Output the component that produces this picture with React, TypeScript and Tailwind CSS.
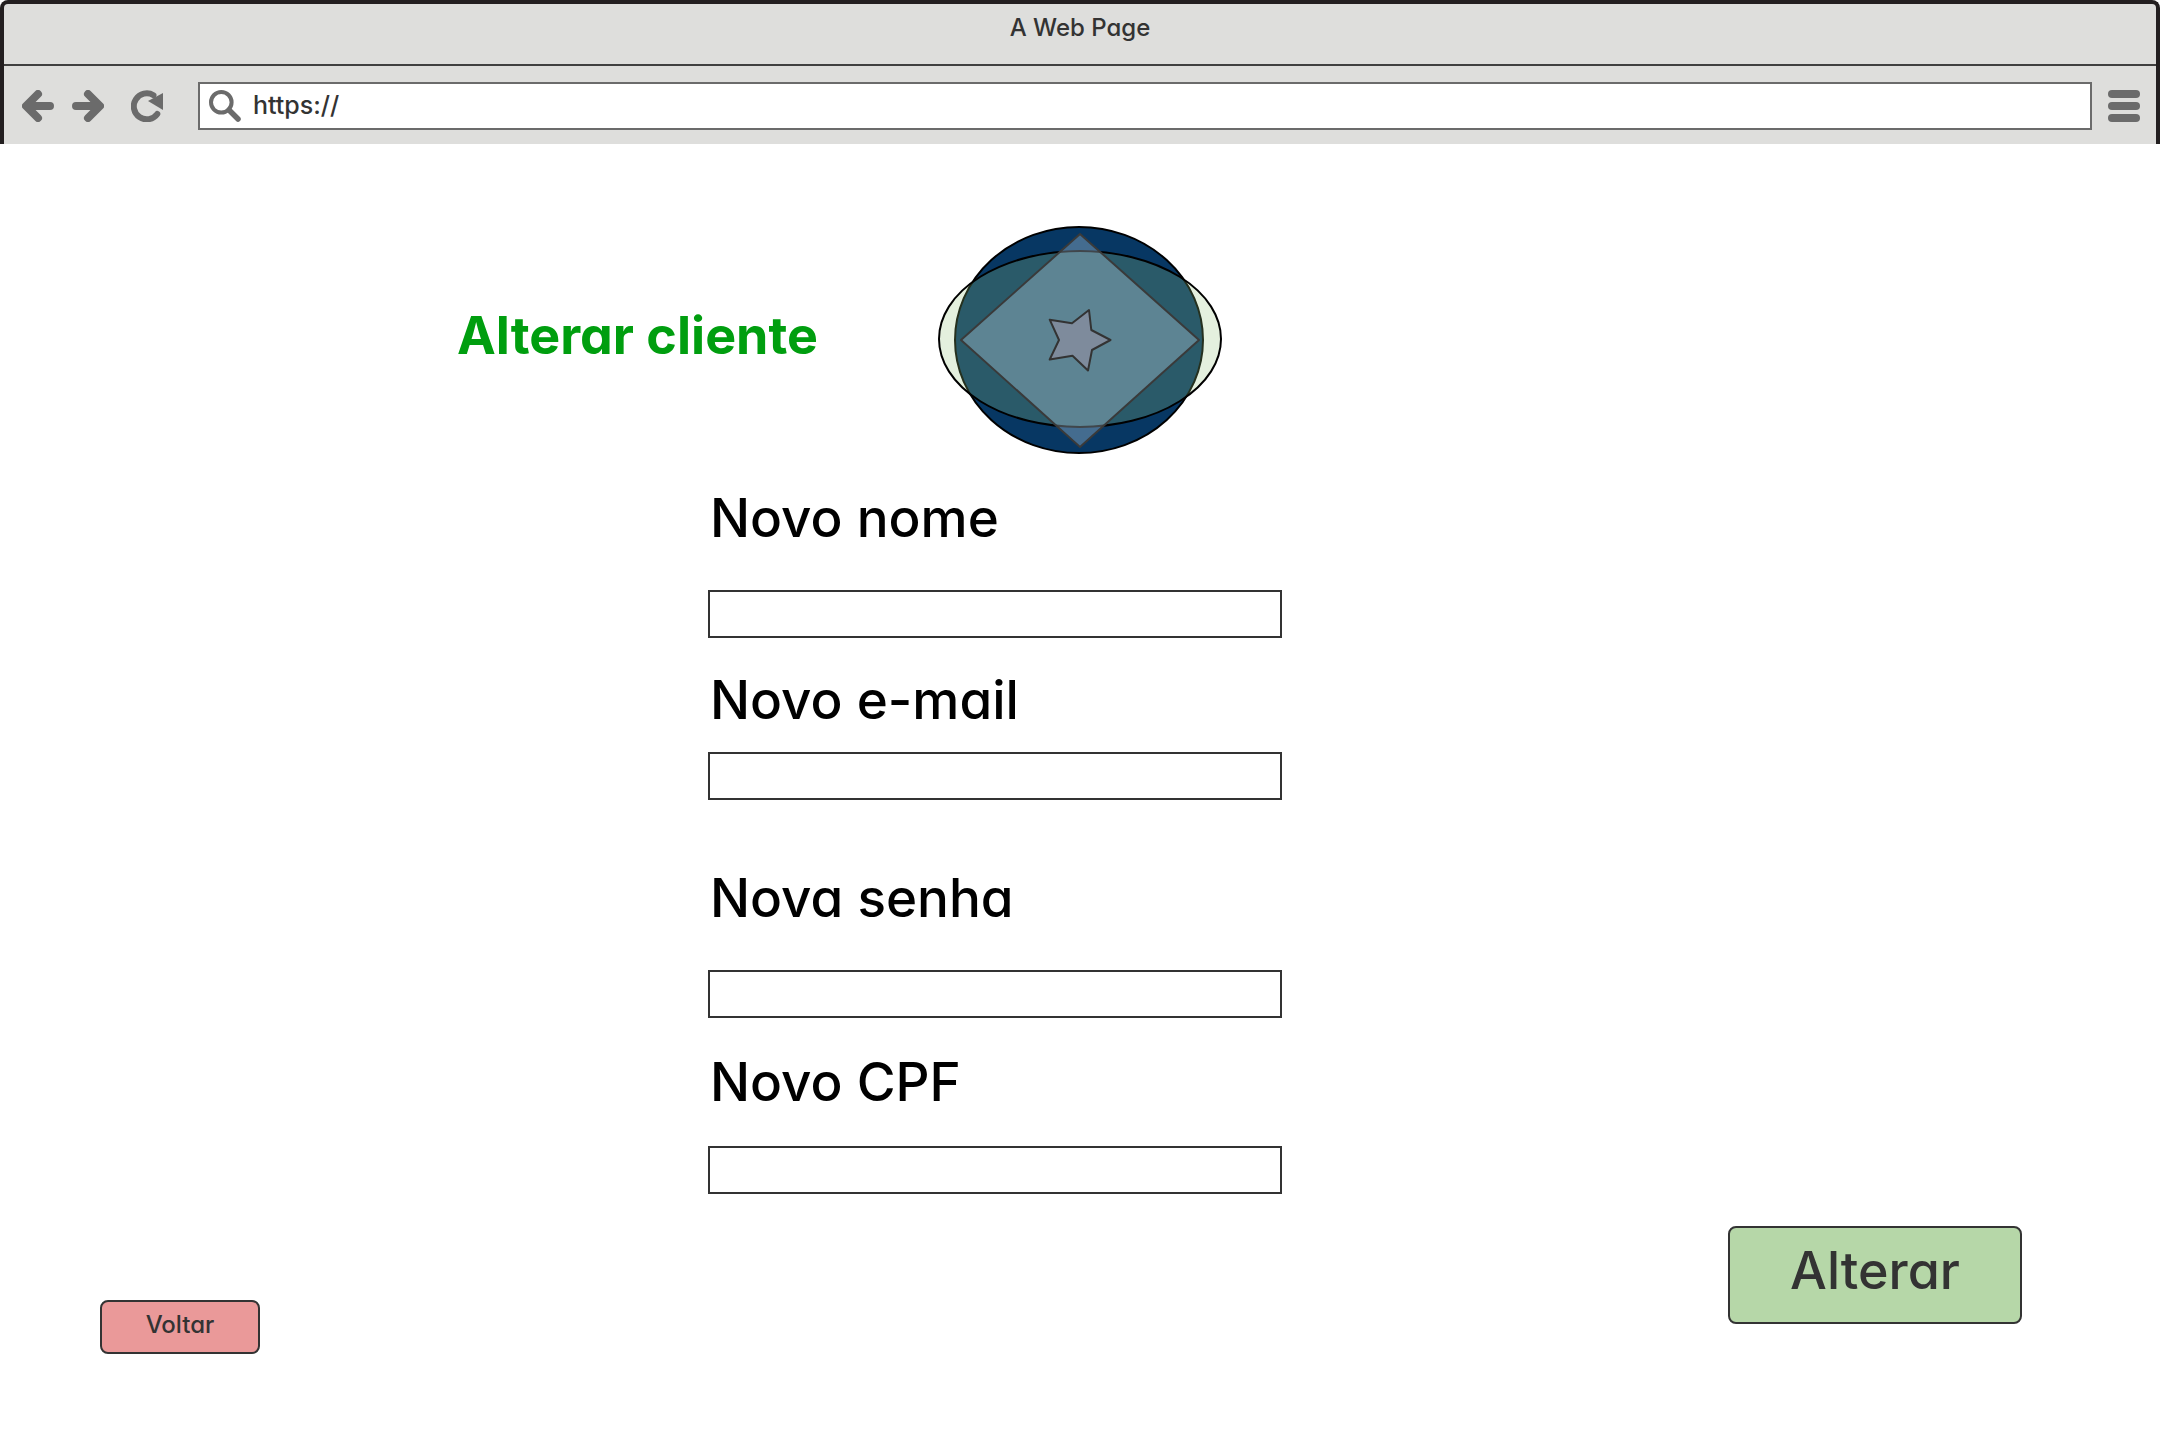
import React from "react";

type Field = { id: string; label: string; type: string; labelGap: string; above: string };

const fields: Field[] = [
  { id: "nome", label: "Novo nome", type: "text", above: "mt-8", labelGap: "gap-10" },
  { id: "email", label: "Novo e-mail", type: "email", above: "mt-[30px]", labelGap: "gap-5" },
  { id: "senha", label: "Nova senha", type: "password", above: "mt-[66px]", labelGap: "gap-10" },
  { id: "cpf", label: "Novo CPF", type: "text", above: "mt-8", labelGap: "gap-8" },
];

function BackIcon() {
  return (
    <svg viewBox="0 0 32 32" className="size-8" fill="none" stroke="#6b6b6b" strokeWidth="8" strokeLinecap="round" strokeLinejoin="round" aria-hidden="true">
      <path d="M16 4L4 16L16 28M5 16H28" />
    </svg>
  );
}

function ForwardIcon() {
  return (
    <svg viewBox="0 0 32 32" className="size-8" fill="none" stroke="#6b6b6b" strokeWidth="8" strokeLinecap="round" strokeLinejoin="round" aria-hidden="true">
      <path d="M16 4L28 16L16 28M27 16H4" />
    </svg>
  );
}

function ReloadIcon() {
  return (
    <svg viewBox="0 0 32 32" className="size-8" aria-hidden="true">
      <path d="M22.5 5.2A13 13 0 1 0 26.3 24" fill="none" stroke="#6b6b6b" strokeWidth="6" strokeLinecap="round" />
      <path d="M32 3V20L17 11Z" fill="#6b6b6b" />
    </svg>
  );
}

function SearchIcon() {
  return (
    <svg viewBox="0 0 32 32" className="size-8 shrink-0" fill="none" stroke="#6b6b6b" aria-hidden="true">
      <circle cx="12.3" cy="12.3" r="10.3" strokeWidth="4" />
      <path d="M20 20L29 29" strokeWidth="5.5" strokeLinecap="round" />
    </svg>
  );
}

function MenuIcon() {
  return (
    <svg viewBox="0 0 32 32" className="size-8" fill="#6b6b6b" aria-hidden="true">
      <rect width="32" height="8" rx="4" />
      <rect y="12" width="32" height="8" rx="4" />
      <rect y="24" width="32" height="8" rx="4" />
    </svg>
  );
}

function Logo() {
  return (
    <svg viewBox="0 0 284 228" className="h-[228px] w-[284px]" strokeWidth="2" strokeLinejoin="round" role="img" aria-label="Logo">
      <ellipse cx="141" cy="114" rx="124" ry="113" fill="#073763" stroke="#000" />
      <ellipse cx="142" cy="113" rx="141" ry="88" fill="#93c47d" fillOpacity="0.25" stroke="#000" />
      <path d="M142 8L261 114L142 221L23 114Z" fill="#cfe2f3" fillOpacity="0.31" stroke="#3a3a3a" />
      <path d="M151 84L153.300 104L172.500 114L154 124L150 144.500L134.500 129.700L111.700 133.500L121 114L111.700 93.700L134 97.300Z" fill="#7e8b9c" stroke="#333" />
    </svg>
  );
}

export default function App() {
  return (
    <div className="min-h-screen bg-white font-['Inter',sans-serif] text-[#333333] [font-feature-settings:'cv11']">
      <header className="rounded-t-lg border-x-4 border-t-4 border-[#231f20] bg-[#dededc]">
        <div className="flex h-[62px] justify-center border-b-2 border-[#404040] pt-2 text-2xl leading-8 font-medium">
          A Web Page
        </div>
        <div className="flex h-[78px] items-center pt-0.5 pr-4 pl-[18px]">
          <button type="button" aria-label="Voltar página" className="mr-[18px]"><BackIcon /></button>
          <button type="button" aria-label="Avançar página" className="mr-[27px]"><ForwardIcon /></button>
          <button type="button" aria-label="Recarregar" className="mr-[35px]"><ReloadIcon /></button>
          <div className="mr-4 flex h-12 grow items-center gap-3 border-2 border-[#6b6b6b] bg-white px-[9px]">
            <SearchIcon />
            <input
              type="text"
              aria-label="Endereço"
              defaultValue="https://"
              className="w-full bg-transparent text-[25px] font-medium outline-none"
            />
          </div>
          <button type="button" aria-label="Menu"><MenuIcon /></button>
        </div>
      </header>

      <main className="pt-[82px]">
        <div className="grid grid-cols-[1fr_auto_1fr] items-center">
          <h1 className="mr-[120px] mb-2 justify-self-end text-[52px] leading-[64px] font-bold text-[#009e0f]">
            Alterar cliente
          </h1>
          <Logo />
        </div>

        <form>
          <div className="flex justify-center pr-[170px]">
            <div className="w-[574px]">
              {fields.map((f) => (
                <div key={f.id} className={`flex flex-col ${f.above} ${f.labelGap}`}>
                  <label htmlFor={f.id} className="pl-0.5 text-[53px] leading-[64px] font-medium text-black">
                    {f.label}
                  </label>
                  <input id={f.id} type={f.type} className="h-12 w-full border-2 border-[#333333] bg-white px-2 text-2xl" />
                </div>
              ))}
            </div>
          </div>

          <div className="mt-8 flex items-start justify-between pr-[138px] pl-[100px]">
            <button type="button" className="mt-[74px] h-[54px] w-40 rounded-lg border-2 border-[#333333] bg-[#ea9999] pb-1 text-2xl font-medium">
              Voltar
            </button>
            <button type="submit" className="h-[98px] w-[294px] rounded-lg border-2 border-[#333333] bg-[#b6d7a8] pb-2 text-[52px] leading-[64px] font-medium">
              Alterar
            </button>
          </div>
        </form>
      </main>
    </div>
  );
}
